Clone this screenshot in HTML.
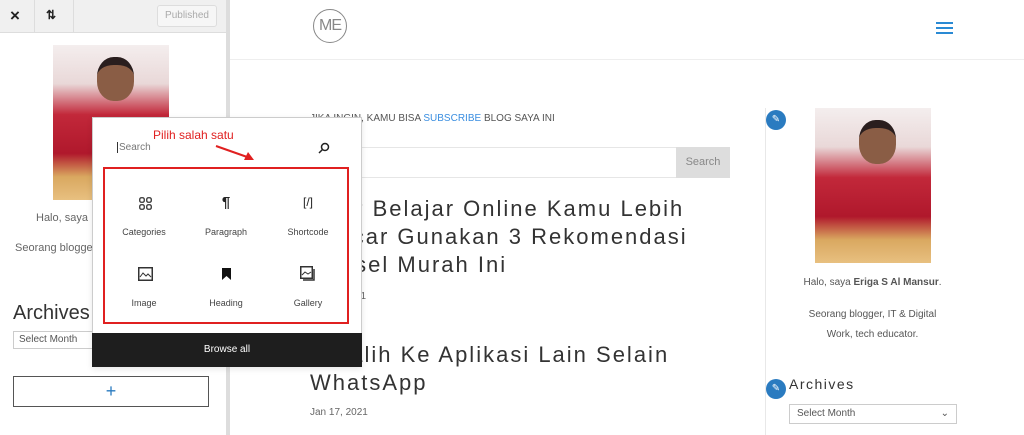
<!DOCTYPE html>
<html><head><meta charset="utf-8"><style>
*{margin:0;padding:0;box-sizing:border-box}
body{width:1024px;height:435px;overflow:hidden;background:#fff;font-family:"Liberation Sans",sans-serif;position:relative;color:#333}
.a{position:absolute}
.photo{background:linear-gradient(180deg,#f4eeee 0%,#e9d8d8 25%,#c2283a 45%,#b0182c 70%,#d9a860 85%,#e8c080 100%);overflow:hidden}
.photo .head{position:absolute;left:38%;top:8%;width:32%;height:28%;background:#8a5d45;border-radius:45%;border-top:8px solid #2a1e1e}
</style></head><body>
<div class="a" style="left:0;top:0;width:226px;height:435px;background:#fff"></div>
<div class="a" style="left:0;top:0;width:228px;height:33px;background:#f0f0f0;border-bottom:1px solid #ddd"></div>
<div class="a" style="left:34px;top:0;width:1px;height:33px;background:#ddd"></div>
<div class="a" style="left:73px;top:0;width:1px;height:33px;background:#ddd"></div>
<div class="a" style="left:10px;top:6px;font-size:17px;font-weight:bold;color:#222">×</div>
<div class="a" style="left:46px;top:8px;font-size:12px;font-weight:bold;color:#222">⇅</div>
<div class="a" style="left:157px;top:5px;width:60px;height:22px;border:1px solid #ddd;border-radius:3px;font-size:10px;color:#aaa;text-align:center;line-height:20px;background:#f6f6f6">Published</div>
<div class="a" style="left:226px;top:0;width:4px;height:435px;background:#ddd"></div>
<div class="a photo" style="left:53px;top:45px;width:116px;height:155px"><div class="head"></div></div>
<div class="a" style="left:36px;top:212px;font-size:11px;color:#666">Halo, saya I</div>
<div class="a" style="left:15px;top:242px;font-size:11px;color:#666">Seorang blogge</div>
<div class="a" style="left:13px;top:302px;font-size:20px;color:#333">Archives</div>
<div class="a" style="left:13px;top:331px;width:90px;height:18px;border:1px solid #ccc;font-size:10px;color:#555;padding:2px 5px">Select Month</div>
<div class="a" style="left:13px;top:376px;width:196px;height:31px;border:1px solid #555;text-align:center;font-size:18px;color:#2a7bc0;line-height:29px">+</div>
<div class="a" style="left:230px;top:59px;width:794px;height:1px;background:#eee"></div>
<div class="a" style="left:313px;top:9px;width:34px;height:34px;border:1px solid #888;border-radius:50%;font-size:16px;color:#888;text-align:center;line-height:32px;letter-spacing:-1px">ME</div>
<div class="a" style="left:936px;top:22px;width:17px;height:2px;background:#2a8ad4;box-shadow:0 5px 0 #2a8ad4,0 10px 0 #2a8ad4"></div>
<div class="a" style="left:310px;top:113px;font-size:10px;color:#555">JIKA INGIN, KAMU BISA <span style="color:#3a8ee0">SUBSCRIBE</span> BLOG SAYA INI</div>
<div class="a" style="left:310px;top:147px;width:420px;height:31px;border:1px solid #e6e6e6;font-size:11px;color:#999;padding:8px 48px"><span style="margin-left:-10px">ni</span></div>
<div class="a" style="left:676px;top:147px;width:54px;height:31px;background:#ddd;color:#888;font-size:11px;text-align:center;line-height:31px">Search</div>
<div class="a" style="left:310px;top:195px;font-size:22px;color:#333;letter-spacing:2px;line-height:28px;width:430px">Agar Belajar Online Kamu Lebih Lancar Gunakan 3 Rekomendasi Ponsel Murah Ini</div>
<div class="a" style="left:355px;top:291px;font-size:10px;color:#666">21</div>
<div class="a" style="left:310px;top:341px;font-size:22px;color:#333;letter-spacing:2px;line-height:28px;width:430px">Beralih Ke Aplikasi Lain Selain WhatsApp</div>
<div class="a" style="left:310px;top:407px;font-size:10px;color:#666">Jan 17, 2021</div>
<div class="a" style="left:765px;top:108px;width:1px;height:327px;background:#e8e8e8"></div>
<div class="a" style="left:766px;top:110px;width:20px;height:20px;border-radius:50%;background:#2a7bc0;color:#fff;font-size:10px;text-align:center;line-height:20px">✎</div>
<div class="a photo" style="left:815px;top:108px;width:116px;height:155px"><div class="head"></div></div>
<div class="a" style="left:765px;top:277px;width:215px;text-align:center;font-size:10px;color:#555">Halo, saya <b>Eriga S Al Mansur</b>.</div>
<div class="a" style="left:765px;top:305px;width:215px;text-align:center;font-size:10px;color:#555;line-height:20px">Seorang blogger, IT &amp; Digital<br>Work, tech educator.</div>
<div class="a" style="left:766px;top:379px;width:20px;height:20px;border-radius:50%;background:#2a7bc0;color:#fff;font-size:10px;text-align:center;line-height:20px">✎</div>
<div class="a" style="left:789px;top:376px;font-size:14px;letter-spacing:1.5px;color:#333">Archives</div>
<div class="a" style="left:789px;top:404px;width:168px;height:20px;border:1px solid #ccc;font-size:10px;color:#555;padding:3px 7px">Select Month<span style="float:right">⌄</span></div>
<div class="a" style="left:92px;top:117px;width:270px;height:250px;background:#fff;border:1px solid #ccc;box-shadow:0 2px 6px rgba(0,0,0,.1)"></div>
<div class="a" style="left:117px;top:142px;font-size:10px;color:#777;border-left:1px solid #333;padding-left:1px">Search</div>
<svg class="a" style="left:318px;top:142px" width="12" height="12"><circle cx="7" cy="5" r="3.5" fill="none" stroke="#222" stroke-width="1.5"/><line x1="4.5" y1="7.5" x2="1" y2="11" stroke="#222" stroke-width="1.5"/></svg>
<div class="a" style="left:153px;top:128px;font-size:12px;color:#e02020">Pilih salah satu</div>
<svg class="a" style="left:210px;top:142px" width="50" height="22"><line x1="6" y1="4" x2="40" y2="16" stroke="#e02020" stroke-width="2"/><polygon points="44,18 34,18 38,10" fill="#e02020"/></svg>
<div class="a" style="left:103px;top:167px;width:246px;height:157px;border:2px solid #e02020"></div>
<svg class="a" style="left:139px;top:197px" width="13" height="13"><rect x="0.75" y="0.75" width="4.5" height="4.5" rx="1.5" fill="none" stroke="#333" stroke-width="1.3"/><rect x="7.75" y="0.75" width="4.5" height="4.5" rx="1.5" fill="none" stroke="#333" stroke-width="1.3"/><rect x="0.75" y="7.75" width="4.5" height="4.5" rx="1.5" fill="none" stroke="#333" stroke-width="1.3"/><rect x="7.75" y="7.75" width="4.5" height="4.5" rx="1.5" fill="none" stroke="#333" stroke-width="1.3"/></svg>
<div class="a" style="left:103px;top:227px;width:82px;text-align:center;font-size:9px;color:#444">Categories</div>
<div class="a" style="left:185px;top:194px;width:82px;text-align:center;font-size:15px;font-weight:bold;color:#222">¶</div>
<div class="a" style="left:185px;top:227px;width:82px;text-align:center;font-size:9px;color:#444">Paragraph</div>
<div class="a" style="left:267px;top:195px;width:82px;text-align:center;font-size:12px;color:#222">[/]</div>
<div class="a" style="left:267px;top:227px;width:82px;text-align:center;font-size:9px;color:#444">Shortcode</div>
<svg class="a" style="left:138px;top:267px" width="15" height="14"><rect x="0.75" y="0.75" width="13.5" height="12.5" fill="none" stroke="#333" stroke-width="1.5"/><path d="M2 10L5 6L8 9L10 7L13 10" fill="none" stroke="#333" stroke-width="1"/></svg>
<div class="a" style="left:103px;top:298px;width:82px;text-align:center;font-size:9px;color:#444">Image</div>
<svg class="a" style="left:222px;top:268px" width="9" height="12"><path d="M0 0H9V12L4.5 8L0 12Z" fill="#111"/></svg>
<div class="a" style="left:185px;top:298px;width:82px;text-align:center;font-size:9px;color:#444">Heading</div>
<svg class="a" style="left:300px;top:266px" width="16" height="16"><rect x="0.75" y="0.75" width="11.5" height="11.5" fill="none" stroke="#333" stroke-width="1.5"/><path d="M14 3V14H3" fill="none" stroke="#333" stroke-width="1.5"/><path d="M2 9L5 6L8 8L11 6" fill="none" stroke="#333" stroke-width="1"/></svg>
<div class="a" style="left:267px;top:298px;width:82px;text-align:center;font-size:9px;color:#444">Gallery</div>
<div class="a" style="left:92px;top:333px;width:270px;height:34px;background:#1e1e1e;color:#fff;font-size:10px;text-align:center;line-height:34px">Browse all</div>
</body></html>
